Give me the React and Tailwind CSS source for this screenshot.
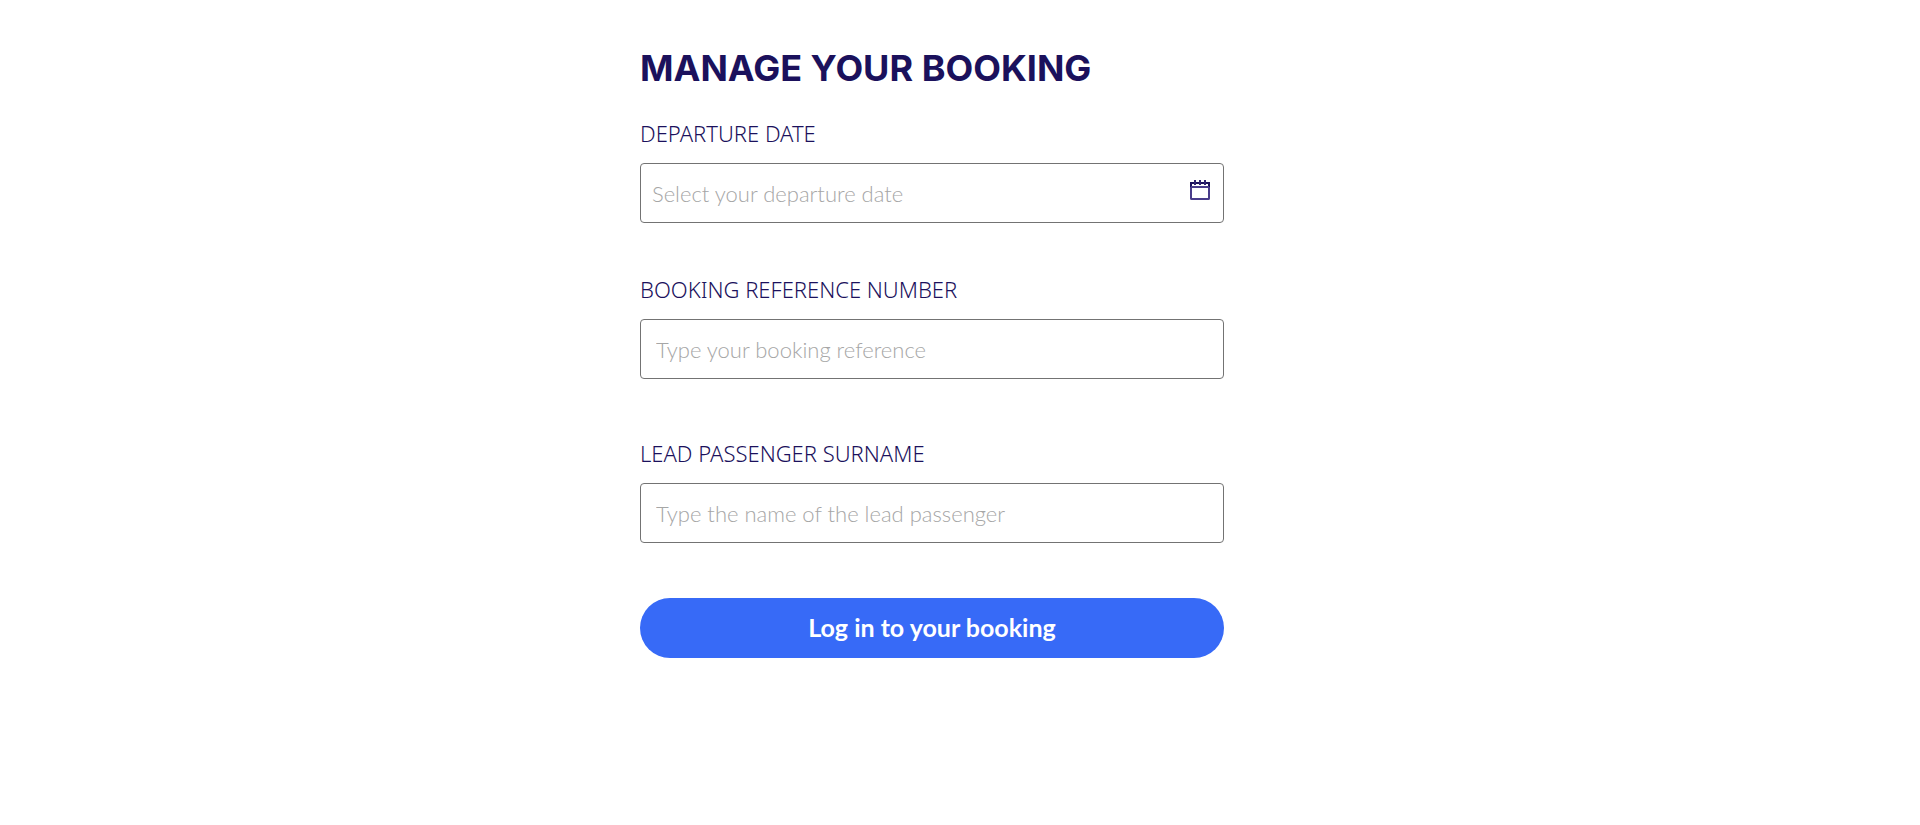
const labelClass = "block font-['Noto_Sans',sans-serif] text-[22px] leading-8 font-light text-[#1b115c] uppercase";
const inputClass =
  "block h-[60px] w-full rounded border border-[#737373] bg-white font-['Lato','Noto_Sans',sans-serif] text-[22px] font-light text-[#1b115c] outline-none placeholder:text-[#a6a6a6] focus:border-[#376af7]";

function CalendarIcon() {
  return (
    <svg width="20" height="20" viewBox="0 0 20 20" fill="none" aria-hidden="true">
      <path d="M1 7V18.5Q1 19 1.500 19H18.500Q19 19 19 18.500V7" stroke="#493c8a" strokeWidth="2" />
      <path d="M1 7V3H19V7" stroke="#1b115c" strokeWidth="2" />
      <path d="M1 7H19" stroke="#493c8a" strokeWidth="2" />
      <path d="M5 0V5M10 0V5M15 0V5" stroke="#2f2470" strokeWidth="2" />
    </svg>
  );
}

export default function App() {
  return (
    <main className="min-h-screen bg-white px-4 pt-12 pb-12 md:pr-8 md:pl-[33.333%]">
      <form className="w-full max-w-[584px]" onSubmit={(e) => e.preventDefault()}>
        <h1 className="font-['Inter',sans-serif] text-[36px] leading-10 font-bold whitespace-nowrap text-[#1b115c]">
          MANAGE YOUR BOOKING
        </h1>

        <div className="mt-[29px]">
          <label htmlFor="departure" className={labelClass}>Departure date</label>
          <div className="relative mt-3.5">
            <input id="departure" type="text" placeholder="Select your departure date" className={`${inputClass} pr-12 pl-[11px]`} />
            <button type="button" aria-label="Open calendar" className="absolute top-[17px] right-[14px] cursor-pointer">
              <CalendarIcon />
            </button>
          </div>
        </div>

        <div className="mt-[50px]">
          <label htmlFor="reference" className={labelClass}>Booking reference number</label>
          <input id="reference" type="text" placeholder="Type your booking reference" className={`${inputClass} mt-3.5 px-[15px]`} />
        </div>

        <div className="mt-[58px]">
          <label htmlFor="surname" className={labelClass}>Lead passenger surname</label>
          <input id="surname" type="text" placeholder="Type the name of the lead passenger" className={`${inputClass} mt-3.5 px-[15px]`} />
        </div>

        <button
          type="submit"
          className="mt-[55px] block h-[60px] w-full cursor-pointer rounded-full bg-[#376af7] font-['Lato','Noto_Sans',sans-serif] text-[25px] font-bold text-white"
        >
          Log in to your booking
        </button>
      </form>
    </main>
  );
}
